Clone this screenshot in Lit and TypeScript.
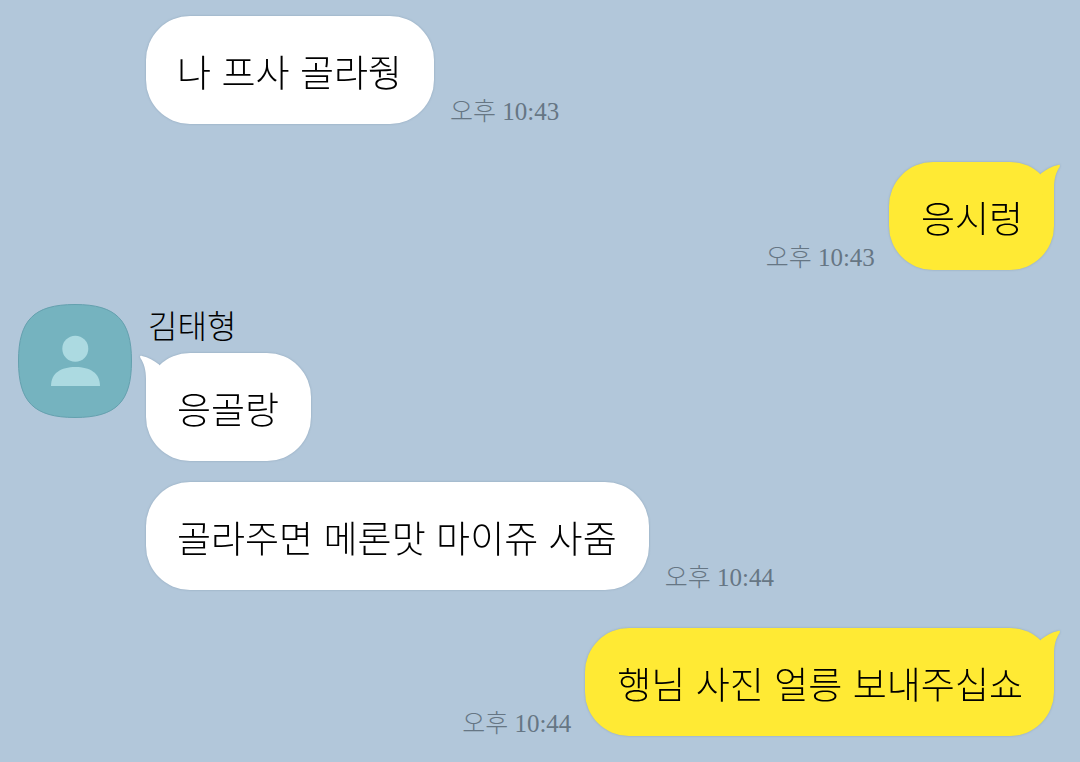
import { LitElement, html, css, nothing } from "lit";
import { customElement, property } from "lit/decorators.js";

interface Message {
  text: string;
  tail?: boolean;
  time?: string;
}

interface Turn {
  sender?: string;
  mine?: boolean;
  messages: Message[];
}

const TURNS: Turn[] = [
  { messages: [{ text: "나 프사 골라줭", time: "오후 10:43" }] },
  { mine: true, messages: [{ text: "응시렁", tail: true, time: "오후 10:43" }] },
  {
    sender: "김태형",
    messages: [
      { text: "응골랑", tail: true },
      { text: "골라주면 메론맛 마이쥬 사줌", time: "오후 10:44" },
    ],
  },
  { mine: true, messages: [{ text: "행님 사진 얼릉 보내주십쇼", tail: true, time: "오후 10:44" }] },
];

@customElement("chat-bubble")
export class ChatBubble extends LitElement {
  @property({ type: Boolean, reflect: true }) mine = false;
  @property({ type: Boolean }) tail = false;
  @property() text = "";
  @property() time = "";

  static styles = css`
    :host {
      display: flex;
      align-items: flex-end;
      gap: 16px;
      --fill: #ffffff;
    }
    :host([mine]) {
      flex-direction: row-reverse;
      gap: 14px;
      --fill: #ffea34;
    }
    .bubble {
      position: relative;
      box-sizing: border-box;
      padding: 36px 32px 28px 31px;
      border-radius: 44px;
      background: var(--fill);
      filter: drop-shadow(0 0 1px rgba(70, 95, 120, 0.3));
    }
    :host([mine]) .bubble {
      padding: 36px 31px 28px 32px;
    }
    .text {
      margin: 0;
      font: 300 37px/44px "Inter", "Noto Sans CJK KR", sans-serif;
      color: #000;
    }
    .tail {
      position: absolute;
      top: 2px;
      left: -6px;
      width: 26px;
      height: 42px;
      fill: var(--fill);
    }
    :host([mine]) .tail {
      left: auto;
      right: -6px;
      transform: scaleX(-1);
    }
    time {
      flex: none;
      font: 300 25px/24px "Liberation Serif", "Noto Sans CJK KR", serif;
      color: #667684;
    }
  `;

  render() {
    return html`
      <div class="bubble">
        ${this.tail
          ? html`<svg class="tail" viewBox="0 0 26 42" aria-hidden="true">
              <path d="M0 1.6C0 .8 1 .6 2 .9C8 2 14 5.500 19 9.500L26 20L8 42H6V24C6 15 4 8 .4 3Z" />
            </svg>`
          : nothing}
        <p class="text">${this.text}</p>
      </div>
      ${this.time ? html`<time>${this.time}</time>` : nothing}
    `;
  }
}

@customElement("profile-picture")
export class ProfilePicture extends LitElement {
  static styles = css`
    :host {
      display: block;
      width: 114px;
      height: 114px;
    }
    svg {
      display: block;
      width: 100%;
      height: 100%;
    }
    .frame {
      fill: #75b3bf;
      stroke: #64a0ae;
    }
    .person {
      fill: #acdae1;
    }
  `;

  render() {
    return html`
      <svg viewBox="0 0 114 114" aria-hidden="true">
        <path
          class="frame"
          d="M57 .5C98 .5 113.500 16 113.500 57S98 113.500 57 113.500S.5 98 .5 57S16 .5 57 .5Z"
        />
        <circle class="person" cx="57.300" cy="44.700" r="13" />
        <path class="person" d="M33 82C33 69 43 63 57.500 63S82 69 82 82Z" />
      </svg>
    `;
  }
}

@customElement("app-root")
export class AppRoot extends LitElement {
  static styles = css`
    :host {
      display: block;
      box-sizing: border-box;
      min-height: 100vh;
      padding: 16px 26px 26px 18px;
      background: #b2c7da;
    }
    .chat {
      display: flex;
      flex-direction: column;
      gap: 38px;
    }
    .turn {
      display: grid;
      grid-template-columns: 114px 1fr;
      column-gap: 14px;
      align-items: start;
    }
    .named {
      margin-top: -4px;
    }
    .messages {
      display: flex;
      flex-direction: column;
      gap: 21px;
      grid-column: 2;
    }
    .name {
      margin: 0 0 9px 2px;
      font: 300 32px/40px "Noto Sans CJK KR", sans-serif;
      color: #000;
    }
  `;

  private renderMessage(m: Message, mine = false) {
    return html`<chat-bubble
      ?mine=${mine}
      ?tail=${m.tail}
      .text=${m.text}
      .time=${m.time ?? ""}
    ></chat-bubble>`;
  }

  private renderTurn({ sender, mine, messages }: Turn) {
    const [first, ...rest] = messages;
    return html`
      <section class="turn ${sender ? "named" : ""}">
        ${sender ? html`<profile-picture></profile-picture>` : nothing}
        <div class="messages">
          <div>
            ${sender ? html`<h2 class="name">${sender}</h2>` : nothing}
            ${this.renderMessage(first, mine)}
          </div>
          ${rest.map((m) => this.renderMessage(m, mine))}
        </div>
      </section>
    `;
  }

  render() {
    return html`<main class="chat">${TURNS.map((t) => this.renderTurn(t))}</main>`;
  }
}
